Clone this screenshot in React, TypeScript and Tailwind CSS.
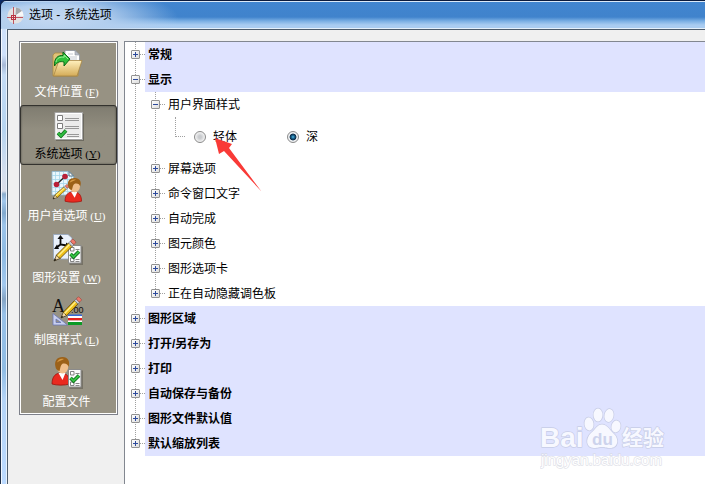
import { useState } from 'react';
import type { ReactNode } from 'react';

function Pencil({ transform }: { transform: string }) {
  return (
    <g transform={transform}>
      <path d="M0 0 L6 -2.500 V2.500 Z" fill="#f3d9a6" stroke="#3a2d10" strokeWidth=".7" />
      <path d="M0 0 L2.400 -1 V1 Z" fill="#111" />
      <rect x="6" y="-2.500" width="17" height="5" fill="#efc01a" stroke="#5d4306" strokeWidth=".8" />
      <rect x="6" y="-1.400" width="17" height="1.500" fill="#fff08a" />
      <rect x="23" y="-2.500" width="2.500" height="5" fill="#c9ced6" stroke="#555" strokeWidth=".5" />
      <rect x="25.500" y="-2.500" width="3.500" height="5" rx="1.200" fill="#ee7a6c" stroke="#8c3a30" strokeWidth=".5" />
    </g>
  );
}

function Person({ transform }: { transform: string }) {
  return (
    <g transform={transform}>
      <path d="M0 27 C0 19 4 16 9 16 C15 16 18 20 18 27 C12 28.500 5 28.500 0 27 Z" fill="#ea2a20" stroke="#9b130d" strokeWidth=".8" />
      <path d="M6.500 16 L10.500 23 L13.500 16 Z" fill="#fff" />
      <ellipse cx="10.500" cy="9.500" rx="5.800" ry="7" fill="#f0bf8c" />
      <path d="M3.500 10 C2 4 5 0 10.500 0 C16 0 18.500 4.500 16.500 10 C16 7.500 14 6 11 6.500 C8.500 7.500 8.500 11 7.500 14 C5 13.500 4 12 3.500 10 Z" fill="#9c6118" />
      <path d="M5 5.500 C6 2 9 1 12 2 C9.500 3.500 7 4 5 5.500 Z" fill="#d79a45" />
    </g>
  );
}

function Checklist() {
  return (
    <g>
      <rect x="19.500" y="13.500" width="13.500" height="18.500" fill="#55524a" opacity=".5" />
      <rect x="18.500" y="12.500" width="12.500" height="17.500" fill="#fbfbfb" stroke="#8b8b8b" />
      <path d="M20.500 14.500h3.500v3.500h-3.500zM20.500 25h3.500v3.500h-3.500z" fill="#fff" stroke="#777" strokeWidth=".9" />
      <path d="M25.500 16.500H29.500M25.500 26.500H29.500M25.500 28.500H29.500" stroke="#888" />
      <path d="M20.500 21 L23.500 24 L29 18.500" fill="none" stroke="#0d6d1b" strokeWidth="3.600" />
      <path d="M20.500 21 L23.500 24 L29 18.500" fill="none" stroke="#35c544" strokeWidth="1.800" />
    </g>
  );
}

function Icon({ children }: { children: ReactNode }) {
  return (
    <svg viewBox="0 0 34 32" className="h-8 w-[34px] shrink-0" aria-hidden="true">
      {children}
    </svg>
  );
}

const folderIcon = (
  <Icon>
    <defs>
      <linearGradient id="folder" x1="0" y1="0" x2="0" y2="1">
        <stop offset="0" stopColor="#fff0bd" />
        <stop offset="1" stopColor="#d4ac58" />
      </linearGradient>
    </defs>
    <path d="M3 29 V8 L5 6 H12 L14 8 H28 V29 Z" fill="#e0c27a" stroke="#b08d3e" strokeWidth=".8" />
    <path d="M15 3.500 H25 L29.500 8 V18 H15 Z" fill="#fff" stroke="#8d93a0" strokeWidth=".8" />
    <path d="M25 3.500 V8 H29.500 Z" fill="#b9bec8" stroke="#8d93a0" strokeWidth=".6" />
    <path d="M18 7H23M18 10H27M18 12H27" stroke="#c6cad2" />
    <path d="M3.500 29 L9 13.500 H32 L27 29 Z" fill="url(#folder)" stroke="#a88742" strokeWidth=".8" />
    <path d="M4.500 19 C4 11 8 8 13 8.500 V5 L20 12 L14 19 V15 C10 14 7 15 4.500 19 Z" fill="#2fc13a" stroke="#0c6a18" />
    <path d="M6 15 C7 10.500 10 10 14.200 10.200 V8 L18 12" fill="none" stroke="#9bf09a" />
  </Icon>
);

const optionsIcon = (
  <Icon>
    <rect x="5" y="5" width="28" height="27" fill="#4a483f" opacity=".5" />
    <rect x="4" y="3.500" width="27.500" height="27" fill="#ececec" stroke="#a5a5a5" />
    <rect x="5" y="4.500" width="25.500" height="25" fill="none" stroke="#fff" />
    <path d="M6.500 6.500h5v5h-5zM6.500 14.500h5v5h-5z" fill="#fff" stroke="#7d7d7d" />
    <path d="M14 9.500H28M14 11.500H28M14 17.500H28M14 19.500H28M16 25.500H28M16 27.500H28" stroke="#8f8f8f" strokeWidth=".9" />
    <path d="M7 24 L10 27 L15 21.500" fill="none" stroke="#0d6d1b" strokeWidth="3.600" />
    <path d="M7 24 L10 27 L15 21.500" fill="none" stroke="#30bd40" strokeWidth="2" />
  </Icon>
);

const userIcon = (
  <Icon>
    <path d="M2 .5 H19 L23.500 5 V24 H2 Z" fill="#eaf7fd" stroke="#8fb8d0" strokeWidth=".8" />
    <path d="M5.500 1V24M9.500 1V24M13.500 1V24M17.500 1V24M21.500 4V24M2 4.500H22M2 8.500H23M2 12.500H23M2 16.500H23M2 20.500H23" stroke="#a5d5ea" strokeWidth=".8" />
    <path d="M19 .5 V5 H23.500 Z" fill="#fff" stroke="#4f6f83" />
    <path d="M6.500 13.500 L15 5.500" stroke="#222" strokeWidth="1.200" />
    <circle cx="6.500" cy="13.500" r="2.800" fill="#b92038" />
    <circle cx="15" cy="5.500" r="2.800" fill="#b92038" />
    <Pencil transform="translate(3 28) rotate(-42) scale(.7)" />
    <Person transform="translate(15 7) scale(.92 .86)" />
  </Icon>
);

const drawingIcon = (
  <Icon>
    <path d="M3.500 1.500 H18 L22 5 V26 H3.500 Z" fill="#eaf1fb" stroke="#93a4bf" strokeWidth=".8" />
    <path d="M10.500 4V11.500L17 12.500M10.500 11.500L6.500 14.500" fill="none" stroke="#0a0a0a" strokeWidth="1.800" />
    <path d="M7.500 6L10.500 2L13.500 6ZM16 9.500L20 12.500L16 15.500ZM7 11.500L4 16L9 16Z" fill="#0a0a0a" />
    <Checklist />
    <Pencil transform="translate(4 28) rotate(-45)" />
  </Icon>
);

const draftIcon = (
  <Icon>
    <path d="M3 18.500 V30 H17.500 Z M6 24 V27.500 H11 Z" fill="#c8cfee" fillRule="evenodd" stroke="#6a76b5" strokeWidth=".8" />
    <rect x="18" y="19.500" width="14" height="1.500" fill="#3568d8" />
    <rect x="18" y="21" width="14" height="2" fill="#fff" />
    <rect x="18" y="23" width="14" height="2.500" fill="#e3211c" />
    <rect x="18" y="25.500" width="14" height="1.500" fill="#fff" />
    <rect x="18" y="27" width="14" height="3" fill="#0b9a26" />
    <text x="2" y="17" fontSize="18" fill="#111" fontFamily="Liberation Serif, serif">A</text>
    <text x="21" y="18" fontSize="9" fill="#111" fontFamily="Liberation Sans, sans-serif">.00</text>
    <Pencil transform="translate(11 23) rotate(-46) scale(.95)" />
  </Icon>
);

const profileIcon = (
  <Icon>
    <Person transform="translate(2 0)" />
    <Checklist />
  </Icon>
);

const pages = [
  { label: '文件位置', hotkey: 'F', icon: folderIcon },
  { label: '系统选项', hotkey: 'Y', icon: optionsIcon },
  { label: '用户首选项', hotkey: 'U', icon: userIcon },
  { label: '图形设置', hotkey: 'W', icon: drawingIcon },
  { label: '制图样式', hotkey: 'L', icon: draftIcon },
  { label: '配置文件', hotkey: '', icon: profileIcon },
];

function Sidebar() {
  const [current, setCurrent] = useState(1);
  return (
    <nav className="w-[99px] shrink-0 self-start border border-[#7d808a] bg-white p-px">
      <ul className="bg-[#979283]">
        {pages.map((page, i) => (
          <li key={page.label} className="h-[62px] last:h-[60px]">
            <button
              type="button"
              onClick={() => setCurrent(i)}
              className={
                i === current
                  ? '-mx-px flex h-[60px] w-[97px] flex-col items-center rounded-[3px] border border-[#33322e] bg-linear-to-b from-[#7f7c70] to-[#928e80] to-40% pt-[3px] pr-0.5 text-black shadow-[inset_0_0_2px_#45443f]'
                  : 'flex h-full w-full flex-col items-center pt-1 pr-1 text-white'
              }
            >
              {page.icon}
              <span className="mt-[5px] text-[12px] leading-4 whitespace-nowrap">
                {page.label}
                {page.hotkey && (
                  <span className="font-['Liberation_Serif','Noto_Sans_CJK_SC',serif] text-[11px]">
                    {' '}(<u>{page.hotkey}</u>)
                  </span>
                )}
              </span>
            </button>
          </li>
        ))}
      </ul>
    </nav>
  );
}

function Gutter({ open, label }: { open?: boolean; label: string }) {
  return (
    <div className="flex h-[25px] w-5 shrink-0 items-center pl-[6px]">
      <button
        type="button"
        aria-label={label}
        aria-expanded={!!open}
        className="size-[9px] shrink-0 rounded-[1px] border border-[#919191] bg-linear-to-br from-white to-[#dcdcdc]"
      >
        <svg viewBox="0 0 7 7" className="block size-[7px]" aria-hidden="true">
          <path d={open ? 'M1 3.5H6' : 'M1 3.5H6M3.5 1V6'} stroke="#2d4a9c" />
        </svg>
      </button>
      <span className="h-px flex-1 border-t border-dotted border-[#a0a0a0]" />
    </div>
  );
}

function Group({ label, open, children }: { label: string; open?: boolean; children?: ReactNode }) {
  return (
    <li>
      <div className="flex">
        <Gutter open={open} label={label} />
        <h2 className="flex-1 bg-[#dfe3ff] pt-0.5 pl-[3px] text-[12px] leading-[23px] font-bold">{label}</h2>
      </div>
      {children}
    </li>
  );
}

function Item({ label, open, children }: { label: string; open?: boolean; children?: ReactNode }) {
  return (
    <li>
      <div className="flex">
        <Gutter open={open} label={label} />
        <h3 className="pt-0.5 pl-[3px] text-[12px] leading-[23px]">{label}</h3>
      </div>
      {children}
    </li>
  );
}

function Choice({ label, checked, onChange }: { label: string; checked: boolean; onChange: () => void }) {
  return (
    <label className="flex items-center gap-[7px] text-[12px] leading-4">
      <input
        type="radio"
        name="ui-style"
        checked={checked}
        onChange={onChange}
        className="size-3 appearance-none rounded-full border border-[#8a8a8a] bg-[radial-gradient(circle,#c9cbce_20%,#f4f4f4_70%)] checked:bg-[radial-gradient(circle_at_50%_50%,#5fc0e8_0,#1b6f9c_18%,#0d2c48_42%,#eef0f2_54%)]"
      />
      {label}
    </label>
  );
}

function StyleChoices() {
  const [style, setStyle] = useState('深');
  return (
    <fieldset className="flex h-[39px] items-center pl-[30px]" aria-label="用户界面样式">
      <span className="h-5 w-[10px] self-start border-b border-l border-dotted border-[#a0a0a0]" />
      <div className="flex gap-[50px] pl-[9px]">
        <Choice label="轻体" checked={style === '轻体'} onChange={() => setStyle('轻体')} />
        <Choice label="深" checked={style === '深'} onChange={() => setStyle('深')} />
      </div>
    </fieldset>
  );
}

function SettingsTree() {
  return (
    <section className="ml-[6px] flex-1 border-t border-l border-[#828790] bg-white">
      <ul className="bg-[repeating-linear-gradient(to_bottom,#a0a0a0_0_1px,transparent_1px_2px)] bg-[size:1px_400px] bg-position-[10px_0] bg-no-repeat">
        <Group label="常规" />
        <Group label="显示" open>
          <ul className="ml-5 bg-[repeating-linear-gradient(to_bottom,#a0a0a0_0_1px,transparent_1px_2px)] bg-[size:1px_200px] bg-position-[10px_0] bg-no-repeat">
            <Item label="用户界面样式" open>
              <StyleChoices />
            </Item>
            <Item label="屏幕选项" />
            <Item label="命令窗口文字" />
            <Item label="自动完成" />
            <Item label="图元颜色" />
            <Item label="图形选项卡" />
            <Item label="正在自动隐藏调色板" />
          </ul>
        </Group>
        <Group label="图形区域" />
        <Group label="打开/另存为" />
        <Group label="打印" />
        <Group label="自动保存与备份" />
        <Group label="图形文件默认值" />
        <Group label="默认缩放列表" />
      </ul>
    </section>
  );
}

function TitleBar() {
  return (
    <header className="flex h-[29px] items-center gap-[5px] rounded-tl-[6px] border-t border-l border-[#0a1a3c] bg-[radial-gradient(ellipse_150px_40px_at_50px_18px,#c3d8f1_0,#b4cfee_35%,transparent_85%),linear-gradient(to_bottom,#dbe9f8_0_1px,#4185cf_1px,#4083cc_16px,#79aee3_20px,#a9ccf1_24px,#a9ccf1_27px,#e4f0fb_27px)] pl-[6px]">
      <svg viewBox="0 0 17 17" className="size-[17px]" aria-hidden="true">
        <circle cx="8.500" cy="8.500" r="8" fill="#e4e2e2" />
        <path d="M8.500 8.500 L9 .5 A8 8 0 0 1 15 4 Z" fill="#a7a7aa" />
        <path d="M8.500 8.500 L15 4 A8 8 0 0 1 16.500 9 Z" fill="#f8f8f8" />
        <path d="M6.500 0V17M0 10.500H16" stroke="#c05560" />
        <rect x="4.500" y="8.500" width="4" height="4" fill="#f2dfe0" stroke="#b93442" />
        <path d="M6.500 9V12M5 10.500H8" stroke="#b93442" />
      </svg>
      <h1 className="text-[12px] leading-4 text-black">选项 - 系统选项</h1>
    </header>
  );
}

function Watermark() {
  return (
    <svg viewBox="0 0 130 64" className="pointer-events-none absolute top-[406px] left-[540px] h-16 w-[130px]" role="img" aria-label="Baidu 经验">
      <g fill="#fff" stroke="#c0c6de" strokeWidth="1.400" paintOrder="stroke" strokeLinejoin="round" opacity=".75">
        <text x="0" y="41" fontSize="28" fontWeight="bold" fontFamily="Liberation Sans, Arial, sans-serif">Bai</text>
        <ellipse cx="49" cy="18" rx="4.500" ry="6.500" transform="rotate(-8 49 18)" />
        <ellipse cx="58" cy="9" rx="4.500" ry="6.500" />
        <ellipse cx="69" cy="9.500" rx="4.500" ry="6.500" transform="rotate(12 69 9.500)" />
        <ellipse cx="76" cy="20.500" rx="4.500" ry="6" transform="rotate(12 76 20.500)" />
        <path d="M62 18.500 C67 18.500 69 23 73 27 C80 33 78 42 70 42 C66 42 65 41 62 41 C59 41 58 42 54 42 C46 42 45 33 51 27 C56 23 57 18.500 62 18.500 Z" />
        <text x="82" y="39" fontSize="21" fontWeight="bold" fontFamily="Noto Sans CJK SC, sans-serif">经验</text>
        <text x="1" y="59" fontSize="15" stroke="#d6d8e2" fontFamily="Liberation Sans, Arial, sans-serif">jingyan.baidu.com</text>
      </g>
      <text x="52" y="39" fontSize="17" fontWeight="bold" fill="#cdd3ec" fontFamily="Liberation Sans, Arial, sans-serif">du</text>
    </svg>
  );
}

export default function App() {
  return (
    <main className="relative flex min-h-screen flex-col overflow-hidden bg-[#0b2a66] font-['Liberation_Sans','Noto_Sans_CJK_SC',sans-serif] text-black">
      <TitleBar />
      <div className="flex flex-1">
        <div className="w-[7px] border-r border-l border-r-[#e9f3fd] border-l-[#20304a] bg-[linear-gradient(to_bottom,#cfe1fa_0,#cfe1fa_26px,#a7b9d6_36px,#c5dcf5_46px,#b6d4f0_100px,#d5dfee_146px,#d9dde8_162px,#8aaccc_165px,#a3c8ec_172px,#82a9cd_184px,#9cc4ea_196px,#8ebbe3_225px,#a2c8ee_256px,#85a4c4_270px,#98c1e8_285px,#8fbce4_340px,#b4d4f7_370px,#bcdaff_100%)]">
          <div className="h-full w-px bg-white/80" />
        </div>
        <div className="flex flex-1 border-t border-l border-[#4d5c6c] bg-[#f0f0f0] pt-[11px] pl-[11px]">
          <Sidebar />
          <SettingsTree />
        </div>
      </div>
      <Watermark />
      <svg viewBox="0 0 50 58" className="pointer-events-none absolute top-[136px] left-[213px] h-[58px] w-[50px]" aria-hidden="true">
        <path d="M2 2 L19 8 L16 12 L48.500 55.500 L11 15 L6 18 Z" fill="#f93a37" />
      </svg>
    </main>
  );
}
